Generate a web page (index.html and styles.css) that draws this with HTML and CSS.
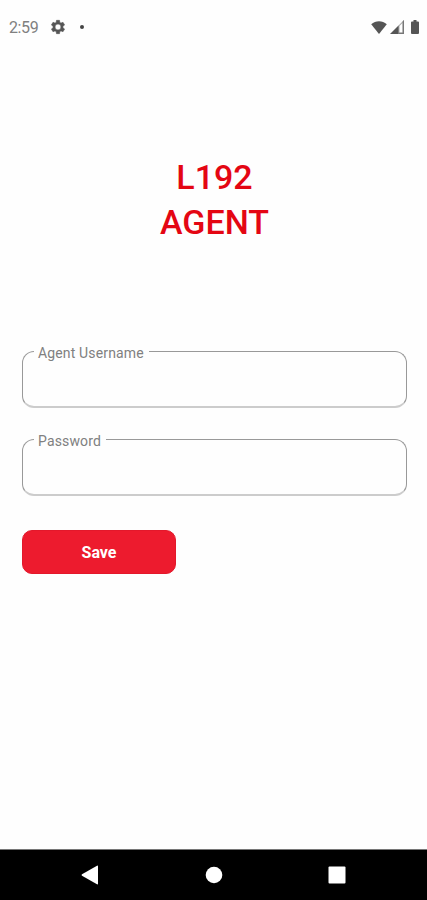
FILE: index.html
```html
<!DOCTYPE html>
<html lang="en">
<head>
    <meta charset="UTF-8">
    <meta name="viewport" content="width=device-width, initial-scale=1.0">
    <title>L192 Agent</title>
    <link rel="stylesheet" href="styles.css">
</head>
<body>
    <header class="status">
        <span class="time">2:59</span>
        <svg class="gear" width="16" height="16" viewBox="0 0 24 24"><path fill="#555" stroke="#555" stroke-width=".8" fill-rule="evenodd" d="M19.4 13a7.500 7.500 0 0 0 0-2l2.500-2-2.400-4.100-3 1.200a7.500 7.500 0 0 0-1.700-1L14.300 2H9.700l-.5 3.100a7.500 7.500 0 0 0-1.700 1l-3-1.200L2.100 9l2.500 2a7.500 7.500 0 0 0 0 2l-2.500 2 2.400 4.100 3-1.200a7.500 7.500 0 0 0 1.700 1l.5 3.100h4.600l.5-3.100a7.500 7.500 0 0 0 1.700-1l3 1.200 2.400-4.100zM12 16.400a4.400 4.400 0 1 1 0-8.800 4.400 4.400 0 0 1 0 8.800z"/></svg>
        <i class="dot"></i>
        <svg class="wifi" width="16" height="13" viewBox="0 0 16 13"><path fill="#555" d="M8 13L.2 3.200C4.500-.8 11.500-.8 15.800 3.200z"/></svg>
        <svg class="signal" width="14" height="14" viewBox="0 0 14 14"><path fill="#aaa" d="M8 6l6-6v14H8z"/><path fill="#fff" d="M9.500 6l3-3v9.500h-3z"/><path fill="#555" d="M0 14l8.500-8.500V14z"/><path fill="#777" d="M12.700 1.300L14 0v14H8.500v-1.300h4.200z"/></svg>
        <svg width="8" height="14" viewBox="0 0 8 14"><path fill="#555" d="M2.500 0h3v1.500H7a1 1 0 0 1 1 1V13a1 1 0 0 1-1 1H1a1 1 0 0 1-1-1V2.500a1 1 0 0 1 1-1h1.500z"/></svg>
    </header>
    <main>
        <h1>L192<br>AGENT</h1>
        <form>
            <fieldset>
                <legend><label for="acc">Agent Username</label></legend>
                <input id="acc" type="text">
            </fieldset>
            <fieldset>
                <legend><label for="pas">Password</label></legend>
                <input id="pas" type="password">
            </fieldset>
            <button type="button">Save</button>
        </form>
    </main>
    <nav>
        <svg width="18" height="20" viewBox="0 0 18 20"><path fill="#fff" d="M16 .7Q17 .2 17 1.400v17.200q0 1.200-1 .7L1 10.700q-1-.7 0-1.400z"/></svg>
        <svg width="18" height="18" viewBox="0 0 18 18"><circle fill="#fff" cx="9" cy="9" r="8.300"/></svg>
        <svg width="18" height="18" viewBox="0 0 18 18"><rect fill="#fff" x=".5" y=".5" width="17" height="17" rx="1"/></svg>
    </nav>
</body>
</html>
```
FILE: styles.css
```css
html,body{margin:0;padding:0;height:100%;width:100%;}
body{
    display: flex;
    flex-direction: column;
    background: #fefefe;
    font-family: Roboto, sans-serif;
}
.status{
    display: flex;
    align-items: center;
    box-sizing: border-box;
    height: 54px;
    padding: 0 8px 0 9px;
}
.time{
    width: 41px;
    padding-top: 1px;
    font-size: 16px;
    letter-spacing: -0.4px;
    color: #808080;
}
.dot{
    width: 4px;
    height: 4px;
    margin-left: 14px;
    border-radius: 50%;
    background: #444;
}
.wifi{margin-left: auto;}
.signal{margin: 0 7px 0 3px;}
main{flex: 1;padding: 0 20px 0 22px;}
h1{
    margin: 101px 0 0;
    text-align: center;
    font-size: 34px;
    font-weight: 500;
    line-height: 45px;
    color: #e40613;
}
form{margin-top: 100px;}
fieldset{
    box-sizing: border-box;
    height: 63px;
    min-width: 0;
    margin: 0 0 25px;
    padding: 0 11px;
    border: 1px solid #999;
    border-bottom: 2px solid #ccc;
    border-radius: 12px;
}
legend{
    height: 12px;
    padding: 0 5px 0 4px;
    font-size: 14px;
    line-height: 16px;
    letter-spacing: 0.15px;
    color: #808080;
}
input{
    box-sizing: border-box;
    width: 100%;
    height: 40px;
    border: 0;
    outline: 0;
    background: none;
    font: 16px Roboto, sans-serif;
}
button{
    display: block;
    width: 154px;
    height: 44px;
    margin-top: 34px;
    border: 1px solid #e3182b;
    border-radius: 10px;
    background: #ed1b2e;
    color: #fff;
    font: bold 16px Roboto, sans-serif;
}
nav{
    display: flex;
    justify-content: space-between;
    align-items: center;
    box-sizing: border-box;
    height: 51px;
    padding: 0 81px 1px 81px;
    border-top: 1px solid #777;
    background: #000;
}
```
